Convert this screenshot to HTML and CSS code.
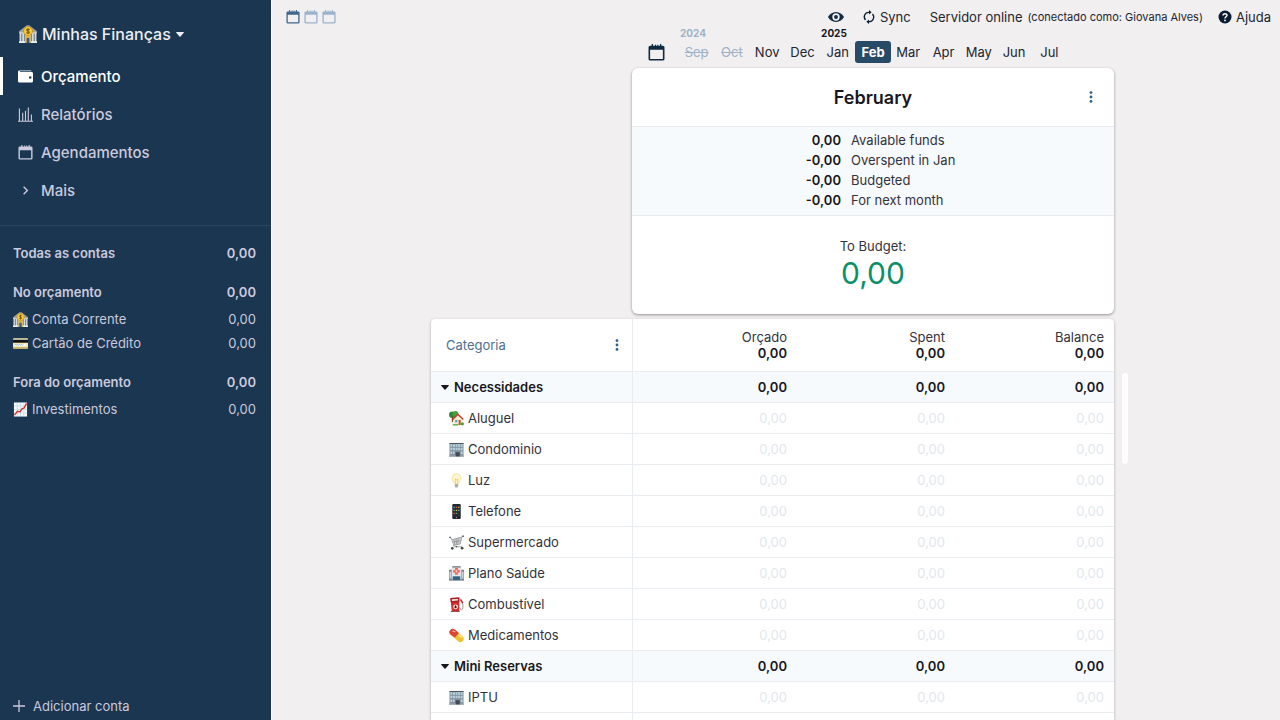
FILE: index.html
```html
<!DOCTYPE html>
<html lang="pt-BR">
<head>
<meta charset="utf-8">
<meta name="viewport" content="width=device-width, initial-scale=1">
<title>Minhas Finanças</title>
<link rel="stylesheet" href="styles.css">
</head>
<body>
<svg class="sprite" aria-hidden="true">
  <symbol id="calendar" viewBox="0 0 16 16"><path fill="currentColor" fill-rule="evenodd" d="M3.500 0h1.200v1.600h1.800V.6h1v1h1.200V.6h1v1h1.600V0h1.200v1.600H14A1.500 1.500 0 0 1 15.500 3.100V14A1.500 1.500 0 0 1 14 15.500H2A1.500 1.500 0 0 1 .5 14V3.100A1.500 1.500 0 0 1 2 1.600h1.500zM2 5.500V14h12V5.500z"/></symbol>
  <symbol id="dots" viewBox="0 0 4 12"><g fill="currentColor"><circle cx="2" cy="1.600" r="1.400"/><circle cx="2" cy="6" r="1.400"/><circle cx="2" cy="10.400" r="1.400"/></g></symbol>
  <symbol id="caret" viewBox="0 0 8 5"><path fill="currentColor" d="M.6 0h6.800a.5.5 0 0 1 .4.800L4.500 4.600a.6.6 0 0 1-1 0L.2.800A.5.5 0 0 1 .6 0z"/></symbol>
  <symbol id="bank" viewBox="0 0 16 16">
    <path fill="#9ea2a6" d="M0 5.500 7 .3h2l7 5.200v2H0z"/><path fill="#d9dcde" d="M.5 6.500h15v9H.5z"/>
    <path fill="#6d7880" d="M2 7.500h1V15H2zM4.600 7.500h1V15h-1zM10.400 7.500h1V15h-1zM13 7.500h1V15h-1z"/>
    <path fill="#eceff1" d="M0 14.500h5.500V16H0zM10.500 14.500H16V16h-5.500z"/><path fill="#e0b73a" d="M5.800 9h4.400v7H5.800z"/><path fill="#3d5b74" d="M6.800 11.500h2.400V16H6.800z"/>
    <circle cx="8" cy="5.400" r="4" fill="#f6cb35" stroke="#ba8613" stroke-width=".6"/>
    <path fill="none" stroke="#76520b" stroke-width=".9" d="M9.500 4.100C8.600 3.300 6.700 3.500 6.800 4.600c.1 1 2.500.7 2.500 1.800 0 1-1.700 1.200-2.700.4M8 2.800V8"/>
  </symbol>
  <symbol id="credit" viewBox="0 0 16 16"><rect y="2.500" width="16" height="11" rx="1" fill="#f4e8b7"/><path fill="#141414" d="M0 4h16v3.200H0z"/><path fill="#fff" d="M1.500 8.500h12v2h-12z"/><path fill="none" stroke="#6d96b8" stroke-width=".8" d="m2 9.500 1-.6 1 .8 1-.8 1 .8 1-.8 1 .8 1-.8 1 .8 1-.6"/><path fill="#c4a757" d="M0 12h16v.600a1 1 0 0 1-1 1H1a1 1 0 0 1-1-1z"/></symbol>
  <symbol id="chart" viewBox="0 0 16 16"><path fill="#f7fafb" d="M1 .5h14v15H1z"/><path stroke="#a9cfe3" stroke-width=".6" d="M4.500.5v15M8 .5v15M11.500.5v15M1 4.200h14M1 8h14M1 11.800h14"/><path fill="none" stroke="#d92f2f" stroke-width="1.500" d="m1.500 14 3.300-4 2.700.5L9.800 7l1.900-.5L14.500 1.500"/></symbol>
  <symbol id="house" viewBox="0 0 16 16"><circle cx="3.500" cy="4" r="3.500" fill="#2f8a35"/><circle cx="7" cy="3" r="2.900" fill="#4c9f3d"/><path fill="#7b4a27" d="M3 6h1.300v6H3z"/><path fill="#faefd6" d="M4.500 8 10 3.500 14.500 9v6h-10z"/><path fill="none" stroke="#b8432f" stroke-width="1.600" d="m3.500 9.500 6-6L15.300 9"/><path fill="#57a6cd" d="M6.500 9.500H9V12H6.500z"/><path fill="#ba6132" d="M10.200 9.500h2.300V15h-2.300z"/><path fill="#5cac3e" d="M4 14h6v1.500H4z"/><circle cx="14.200" cy="13.700" r="1.800" fill="#4da338"/></symbol>
  <symbol id="office" viewBox="0 0 16 16"><path fill="#82919a" d="M.5 1h15v14.500H.5z"/><path fill="#b8d3e0" d="M1.500 2.500h2v2.500h-2zM4.300 2.500h2v2.500h-2zM7 2.500h2v2.500H7zM9.700 2.500h2v2.500h-2zM12.500 2.500h2v2.500h-2zM1.500 6.200h2v2.500h-2zM4.300 6.200h2v2.500h-2zM7 6.200h2v2.500H7zM9.700 6.200h2v2.500h-2zM12.500 6.200h2v2.500h-2zM1.500 10h2v2.800h-2zM4.300 10h1.700v2.800H4.300zM12.500 10h2v2.800h-2z"/><path fill="#3e4a53" d="M7 11h4.500v4.500H7zM.5 1h15v.8H.5z"/><path fill="#a0a7aa" d="M0 14.500h7v1.200H0zM11.500 14.500H16v1.200h-4.500z"/></symbol>
  <symbol id="bulb" viewBox="0 0 16 16"><path fill="#fff6d2" stroke="#f3d77c" stroke-width=".8" d="M8 .8a4.700 4.700 0 0 0-4.700 4.700c0 2.500 2.300 3.700 2.700 6h4c.4-2.300 2.700-3.500 2.700-6A4.700 4.700 0 0 0 8 .8z"/><path fill="none" stroke="#e9bf57" stroke-width=".7" d="M7 11 6.500 6.500 8 7.300l1.500-.8L9 11"/><path fill="#a9b0b1" d="M6.200 11.700h3.600v2.500L9 15.500H7l-.8-1.300z"/></symbol>
  <symbol id="phone" viewBox="0 0 16 16"><rect x="3.500" width="9" height="16" rx="1.200" fill="#202529"/><path fill="#283038" d="M4.300 1.500h7.400v11.700H4.300z"/><path fill="#53b9d4" d="M4.800 2.800h1.400v1.400H4.800zM9.800 6h1.400v1.400H9.800z"/><path fill="#e25344" d="M7.300 2.800h1.400v1.400H7.300zM4.800 9.200h1.400v1.400H4.800z"/><path fill="#e5b83c" d="M9.800 2.800h1.400v1.400H9.800zM7.300 6h1.400v1.400H7.300z"/><path fill="#62a64b" d="M4.800 6h1.400v1.400H4.800zM7.300 9.200h1.400v1.400H7.300z"/><circle cx="8" cy="14.500" r=".7" fill="#aaa"/></symbol>
  <symbol id="cart" viewBox="0 0 16 16"><path fill="#d5d7d8" d="m4.500 5 9-3.500-1.500 8L5.500 11z"/><path fill="none" stroke="#85898b" stroke-width=".8" d="M0 2.500l2.500 1 3 9h8.500M3 5l10-2.500 2.500-1.300M13.500 2.500l-1.500 7L5 11M5 5l1.500 5.500M7.300 4.300l1 5.500M9.800 3.600l-.2 5.500M3.800 7.500l8.500-1.500"/><path fill="#6b6f71" d="M0 1.800h2v1.400H0zM14 .500h2V2h-2z"/><circle cx="3.500" cy="14.200" r="1.400" fill="#414547"/><circle cx="14" cy="14" r="1.400" fill="#414547"/><circle cx="8" cy="12.500" r=".8" fill="#414547"/></symbol>
  <symbol id="hospital" viewBox="0 0 16 16"><path fill="#8e9aa2" d="M0 4.500h16V15H0z"/><path fill="#e3e6e7" d="M3 1h10v14H3z"/><path fill="#66727a" d="M3.500.3h9v1.400h-9zM0 4h2.800v1H0zM13.200 4H16v1h-2.800z"/><path fill="#ee6b62" d="M6.500 2.200h3v2h2v3h-2v2h-3v-2h-2v-3h2z"/><circle cx="8" cy="5.700" r="1.100" fill="#f6cfcb"/><path fill="#2b6485" d="M4 11h8v4H4z"/><path fill="#d3dadd" d="M.8 6.500h1.400V13H.8zM13.800 6.500h1.400V13h-1.400z"/><path fill="#5c6870" d="M0 14.500h16v1H0z"/></symbol>
  <symbol id="pump" viewBox="0 0 16 16"><path fill="#d62a2e" d="m1.500 1 9.500-.5v14.500l-8 .5z"/><path fill="#a51f24" d="m1.500 1 9.500-.5v4.700L2 5.800z"/><path fill="#f6e8e6" d="M3 2.500 9.500 2v1.800l-6.300.5z"/><circle cx="7" cy="10.500" r="2.600" fill="#f5e7e3"/><path fill="#42161a" d="M7 8.500c.8 1.200 1.200 1.600 1.200 2.300a1.200 1.200 0 0 1-2.400 0c0-.7.400-1.100 1.200-2.300z"/><path fill="none" stroke="#8a8b8b" stroke-width="1" d="M11 11.500c1.500 0 1 2.500 2.500 2.200 1.800-.4 1.200-3.700 1.200-6.200L12.500 4"/><path fill="#cf3333" d="m11.500 3 1.500-.8L15.500 6l-1.500 1z"/><path fill="#8a5557" d="M2 14.800h9.500V16H2z"/></symbol>
  <symbol id="pill" viewBox="0 0 16 16"><path stroke="#f0c32e" stroke-width="7" stroke-linecap="round" d="m7.500 7.500 4.600 4"/><path stroke="#dc4530" stroke-width="7" stroke-linecap="round" d="M3.900 4.500 5 5.400"/><path fill="#dc4530" d="M6.200 1.600 10.500 5.200 6.300 10.200 1.800 6z"/><path fill="none" stroke="#f7a798" stroke-width="1.200" stroke-linecap="round" d="M4 3.300 6.500 4"/><path stroke="#fff0a0" stroke-width="1.200" stroke-linecap="round" d="m10.500 7.500 3 2.500"/></symbol>
</svg>
<div class="app">
  <aside class="sidebar">
    <button class="budget-name" type="button"><svg class="emoji-lg"><use href="#bank"/></svg><span>Minhas Finanças</span><svg class="caret"><use href="#caret"/></svg></button>
    <nav class="menu">
      <a class="menu-item active" href="#orcamento"><svg class="menu-icon" viewBox="0 0 16 16"><path fill="currentColor" d="M1.500 1.500h12A1 1 0 0 1 14.500 2.500H2v.8h12.500A1.500 1.500 0 0 1 16 4.800v8.200a1.500 1.500 0 0 1-1.500 1.500h-13A1.500 1.500 0 0 1 0 13V3a1.500 1.500 0 0 1 1.500-1.500z"/><circle cx="13" cy="9" r="1.300" fill="#1a3650"/></svg>Orçamento</a>
      <a class="menu-item" href="#relatorios"><svg class="menu-icon" viewBox="0 0 16 16"><path fill="none" stroke="currentColor" stroke-width="1.200" d="M0 15.200h16M1.500 15V1.500M5 15V6M8 15V4M11 15V.5M14.300 15V8"/></svg>Relatórios</a>
      <a class="menu-item" href="#agendamentos"><svg class="menu-icon"><use href="#calendar"/></svg>Agendamentos</a>
      <button class="menu-item" type="button"><svg class="menu-icon" viewBox="0 0 16 16"><path fill="none" stroke="currentColor" stroke-width="1.500" d="m6 4 4 4-4 4"/></svg>Mais</button>
    </nav>
    <div class="accounts">
      <a class="account total" href="#todas"><span>Todas as contas</span><span>0,00</span></a>
      <section class="account-group">
        <a class="account total" href="#no-orcamento"><span>No orçamento</span><span>0,00</span></a>
        <a class="account" href="#corrente"><span class="account-name"><svg class="emoji"><use href="#bank"/></svg>Conta Corrente</span><span>0,00</span></a>
        <a class="account" href="#cartao"><span class="account-name"><svg class="emoji"><use href="#credit"/></svg>Cartão de Crédito</span><span>0,00</span></a>
      </section>
      <section class="account-group">
        <a class="account total" href="#fora"><span>Fora do orçamento</span><span>0,00</span></a>
        <a class="account" href="#investimentos"><span class="account-name"><svg class="emoji"><use href="#chart"/></svg>Investimentos</span><span>0,00</span></a>
      </section>
    </div>
    <button class="add-account" type="button"><svg class="plus" viewBox="0 0 12 12"><path stroke="currentColor" stroke-width="1.300" d="M6 0v12M0 6h12"/></svg>Adicionar conta</button>
  </aside>
  <main class="main">
    <header class="topbar">
      <div class="month-count">
        <button type="button" aria-label="1 mês"><svg class="cal-sm on"><use href="#calendar"/></svg></button>
        <button type="button" aria-label="2 meses"><svg class="cal-sm"><use href="#calendar"/></svg></button>
        <button type="button" aria-label="3 meses"><svg class="cal-sm"><use href="#calendar"/></svg></button>
      </div>
      <div class="tools">
        <button type="button" aria-label="Privacidade"><svg class="eye" viewBox="0 0 16 12"><path fill="currentColor" fill-rule="evenodd" d="M8 1c3.600 0 6.500 2.300 8 5-1.500 2.700-4.400 5-8 5S1.500 8.700 0 6c1.500-2.700 4.400-5 8-5zm0 1.300a3.700 3.700 0 1 0 0 7.400 3.700 3.700 0 0 0 0-7.400z"/><circle cx="8" cy="6" r="1.900" fill="currentColor"/></svg></button>
        <button class="sync" type="button"><svg class="tool-icon" viewBox="0 0 14 14"><g fill="none" stroke="currentColor" stroke-width="1.300"><path d="M8 2.300H6.800A4.600 4.600 0 0 0 3.500 10M6 11.700h1.200A4.600 4.600 0 0 0 10.500 4"/></g><path fill="currentColor" d="M7 0v4.600l2.600-2.300zM7 9.400V14l-2.600-2.300z"/></svg>Sync</button>
        <button class="server" type="button">Servidor online <small>(conectado como: Giovana Alves)</small></button>
        <button class="help" type="button"><svg class="tool-icon" viewBox="0 0 14 14"><circle cx="7" cy="7" r="6.500" fill="currentColor"/><path fill="none" stroke="#fff" stroke-width="1.500" d="M5 5.500C5 3.300 9 3.200 9 5.300 9 6.800 7 6.700 7 8.500"/><circle cx="7" cy="10.400" r=".9" fill="#fff"/></svg>Ajuda</button>
      </div>
    </header>
    <div class="budget">
      <nav class="months">
        <button class="today" type="button" aria-label="Hoje"><svg class="cal"><use href="#calendar"/></svg></button>
        <div class="strip">
          <span class="year past">2024</span><span class="year now">2025</span>
          <button class="month past" type="button">Sep</button><button class="month past" type="button">Oct</button><button class="month" type="button">Nov</button><button class="month" type="button">Dec</button><button class="month" type="button">Jan</button><button class="month selected" type="button">Feb</button><button class="month" type="button">Mar</button><button class="month" type="button">Apr</button><button class="month" type="button">May</button><button class="month" type="button">Jun</button><button class="month" type="button">Jul</button>
        </div>
      </nav>
      <section class="card">
        <div class="card-head"><span></span><h1>February</h1><button type="button" aria-label="Menu do mês"><svg class="dots"><use href="#dots"/></svg></button></div>
        <dl class="summary">
          <dt>Available funds</dt><dd>0,00</dd>
          <dt>Overspent in Jan</dt><dd>-0,00</dd>
          <dt>Budgeted</dt><dd>-0,00</dd>
          <dt>For next month</dt><dd>-0,00</dd>
        </dl>
        <div class="to-budget"><span>To Budget:</span><button type="button">0,00</button></div>
      </section>
      <div class="grid-wrap">
        <table class="grid">
          <colgroup><col class="c-name"><col class="c-budgeted"><col class="c-spent"><col class="c-balance"></colgroup>
          <thead><tr><th scope="col"><div class="cat-head">Categoria<button type="button" aria-label="Menu de categorias"><svg class="dots"><use href="#dots"/></svg></button></div></th><th scope="col">Orçado<b>0,00</b></th><th scope="col">Spent<b>0,00</b></th><th scope="col">Balance<b>0,00</b></th></tr></thead>
          <tbody>
            <tr class="group"><td><button class="toggle" type="button"><svg class="caret"><use href="#caret"/></svg>Necessidades</button></td><td>0,00</td><td>0,00</td><td>0,00</td></tr>
            <tr><td><div class="cat"><svg class="emoji"><use href="#house"/></svg>Aluguel</div></td><td>0,00</td><td>0,00</td><td>0,00</td></tr>
            <tr><td><div class="cat"><svg class="emoji"><use href="#office"/></svg>Condominio</div></td><td>0,00</td><td>0,00</td><td>0,00</td></tr>
            <tr><td><div class="cat"><svg class="emoji"><use href="#bulb"/></svg>Luz</div></td><td>0,00</td><td>0,00</td><td>0,00</td></tr>
            <tr><td><div class="cat"><svg class="emoji"><use href="#phone"/></svg>Telefone</div></td><td>0,00</td><td>0,00</td><td>0,00</td></tr>
            <tr><td><div class="cat"><svg class="emoji"><use href="#cart"/></svg>Supermercado</div></td><td>0,00</td><td>0,00</td><td>0,00</td></tr>
            <tr><td><div class="cat"><svg class="emoji"><use href="#hospital"/></svg>Plano Saúde</div></td><td>0,00</td><td>0,00</td><td>0,00</td></tr>
            <tr><td><div class="cat"><svg class="emoji"><use href="#pump"/></svg>Combustível</div></td><td>0,00</td><td>0,00</td><td>0,00</td></tr>
            <tr><td><div class="cat"><svg class="emoji"><use href="#pill"/></svg>Medicamentos</div></td><td>0,00</td><td>0,00</td><td>0,00</td></tr>
            <tr class="group"><td><button class="toggle" type="button"><svg class="caret"><use href="#caret"/></svg>Mini Reservas</button></td><td>0,00</td><td>0,00</td><td>0,00</td></tr>
            <tr><td><div class="cat"><svg class="emoji"><use href="#office"/></svg>IPTU</div></td><td>0,00</td><td>0,00</td><td>0,00</td></tr>
            <tr><td></td><td></td><td></td><td></td></tr>
          </tbody>
        </table>
        <div class="scroll-thumb"></div>
      </div>
    </div>
  </main>
</div>
</body>
</html>
```
FILE: styles.css
```css
* { box-sizing: border-box; }
body {
  margin: 0;
  background: #f1eff0;
  color: #33323c;
  font: 13px/20px Inter, "Liberation Sans", sans-serif;
}
button {
  display: flex;
  align-items: center;
  margin: 0;
  padding: 0;
  border: 0;
  background: none;
  color: inherit;
  font: inherit;
  cursor: pointer;
}
a { color: inherit; text-decoration: none; }
svg { display: block; flex: none; }
.sprite { position: absolute; width: 0; height: 0; }
.app { display: flex; height: 100vh; overflow: hidden; }

.sidebar {
  display: flex;
  flex-direction: column;
  flex: 0 0 272px;
  border-right: 1px solid #f8f8f8;
  background: #1a3650;
  color: #cbc9dc;
}
.budget-name {
  gap: 5px;
  height: 34px;
  margin: 17px 0 6px 19px;
  color: #eeedf5;
  font-size: 16px;
  font-weight: 500;
}
.caret { width: 8px; height: 5px; }
.emoji { width: 15px; height: 15px; }
.emoji-lg { width: 18px; height: 18px; }
.menu { padding-bottom: 16px; border-bottom: 1px solid #294660; }
.menu-item {
  display: flex;
  align-items: center;
  gap: 8px;
  width: 100%;
  height: 38px;
  padding: 1px 0 0 15px;
  border-left: 3px solid transparent;
  font-size: 15px;
  font-weight: 500;
}
.menu-item.active { border-color: #fff; color: #fff; }
.menu-icon { width: 15px; height: 15px; }
.accounts { flex: 1; padding: 15px 15px 0 13px; }
.account { display: flex; justify-content: space-between; line-height: 24px; }
.account.total { font-weight: 600; }
.account-name { display: flex; align-items: center; gap: 4px; }
.account-group { padding-top: 15px; }
.account-group .total { margin-bottom: 3px; }
.add-account { gap: 8px; padding: 0 0 4px 13px; }
.plus { width: 12px; height: 12px; }

.main { flex: 1; min-width: 0; }
.topbar {
  display: flex;
  justify-content: space-between;
  height: 27px;
  padding: 7px 9px 0 14px;
  color: #22242f;
}
.month-count, .tools, .topbar button { display: flex; align-items: center; height: 20px; }
.month-count { gap: 4px; }
.cal-sm { width: 14px; height: 14px; color: #9bb3cc; }
.cal-sm.on { color: #41678a; }
.eye { width: 16px; height: 12px; margin-right: 18px; color: #102a43; }
.tool-icon { width: 14px; height: 14px; margin-right: 4px; color: #0b1d33; }
.sync { margin-right: 19px; }
.server { gap: 5px; margin-right: 15px; }
.server small { font-size: 11px; }

.budget { max-width: 690px; margin: 0 auto; padding-right: 7px; }
.months {
  display: flex;
  align-items: flex-end;
  gap: 14px;
  margin-left: 201px;
  padding: 0 47px 5px 16px;
}
.today { height: 22px; color: #102a43; }
.cal { width: 17px; height: 17px; }
.strip { display: grid; grid-template-columns: repeat(11, 1fr); flex: 1; row-gap: 2px; }
.year { padding-left: 1px; font-size: 10px; font-weight: 700; line-height: 12px; }
.year.past { grid-column: 1 / 5; color: #9fb3c8; }
.year.now { grid-column: 5 / 12; color: #18171f; }
.month { justify-content: center; height: 22px; padding-bottom: 1px; border-radius: 3px; color: #22242f; }
.month.past { color: #9fb3c8; text-decoration: line-through; }
.month.selected { background: #274a67; color: #fff; font-weight: 700; }

.card {
  margin: 0 0 5px 201px;
  border-radius: 6px;
  background: #fff;
  box-shadow: 0 1px 3px rgba(0, 0, 0, .4);
}
.card-head {
  display: grid;
  grid-template-columns: 1fr auto 1fr;
  align-items: center;
  height: 58px;
  padding: 0 21px;
}
.card-head h1 { margin: 0; padding-top: 2px; font-size: 18px; font-weight: 600; line-height: 24px; color: #18171f; }
.card-head button { justify-self: end; }
.dots { width: 4px; height: 12px; color: #315f88; }
.summary {
  display: grid;
  grid-template-columns: 209px 1fr;
  column-gap: 10px;
  grid-auto-flow: dense;
  margin: 0;
  padding: 3px 0 5px;
  border: solid #e8ecf0;
  border-width: 1px 0;
  background: #f7fafc;
}
.summary dt { grid-column: 2; }
.summary dd { grid-column: 1; margin: 0; text-align: right; font-weight: 600; color: #18171f; }
.to-budget {
  display: flex;
  flex-direction: column;
  align-items: center;
  padding: 20px 0 24px;
}
.to-budget button { height: 34px; color: #0b8f69; font-size: 30px; }

.grid-wrap { position: relative; }
.grid {
  width: 100%;
  table-layout: fixed;
  border-collapse: separate;
  border-spacing: 0;
  border-radius: 4px 4px 0 0;
  background: #fff;
  box-shadow: 0 1px 3px rgba(0, 0, 0, .3);
}
.c-name { width: 202px; }
.c-budgeted { width: 164px; }
.c-spent { width: 158px; }
th, td {
  height: 31px;
  padding: 0 10px 0 0;
  border-bottom: 1px solid #e9edf1;
  color: #e3e7ed;
  text-align: right;
}
th { height: 53px; color: #33323c; font-weight: 400; line-height: 16px; }
th b { display: block; color: #18171f; font-weight: 600; }
th:first-child, td:first-child { border-right: 1px solid #e9edf1; text-align: left; color: #33323c; }
.cat-head { display: flex; align-items: center; justify-content: space-between; padding: 0 3px 0 15px; color: #4c6f92; }
.cat { display: flex; align-items: center; gap: 4px; padding-left: 18px; }
.group td, .group td:first-child { background: #f7fafc; color: #18171f; font-weight: 600; }
.toggle { gap: 5px; padding-left: 10px; }
.scroll-thumb {
  position: absolute;
  top: 54px;
  right: -14px;
  width: 6px;
  height: 91px;
  border-radius: 3px;
  background: #fff;
}
```
